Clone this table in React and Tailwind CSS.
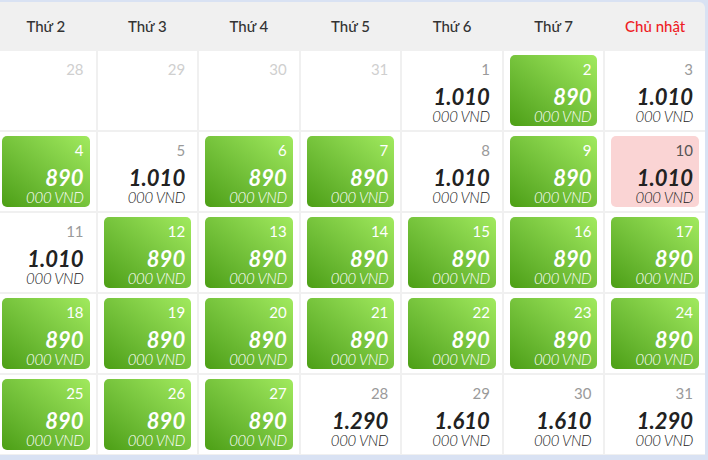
const days = ["Thứ 2", "Thứ 3", "Thứ 4", "Thứ 5", "Thứ 6", "Thứ 7", "Chủ nhật"];

// type: off = previous month, cheap = green, pick = pink, normal = white
const cells = [
  { d: 28, type: "off" },
  { d: 29, type: "off" },
  { d: 30, type: "off" },
  { d: 31, type: "off" },
  { d: 1, price: "1.010" },
  { d: 2, price: "890", type: "cheap" },
  { d: 3, price: "1.010" },

  { d: 4, price: "890", type: "cheap" },
  { d: 5, price: "1.010" },
  { d: 6, price: "890", type: "cheap" },
  { d: 7, price: "890", type: "cheap" },
  { d: 8, price: "1.010" },
  { d: 9, price: "890", type: "cheap" },
  { d: 10, price: "1.010", type: "pick" },

  { d: 11, price: "1.010" },
  { d: 12, price: "890", type: "cheap" },
  { d: 13, price: "890", type: "cheap" },
  { d: 14, price: "890", type: "cheap" },
  { d: 15, price: "890", type: "cheap" },
  { d: 16, price: "890", type: "cheap" },
  { d: 17, price: "890", type: "cheap" },

  { d: 18, price: "890", type: "cheap" },
  { d: 19, price: "890", type: "cheap" },
  { d: 20, price: "890", type: "cheap" },
  { d: 21, price: "890", type: "cheap" },
  { d: 22, price: "890", type: "cheap" },
  { d: 23, price: "890", type: "cheap" },
  { d: 24, price: "890", type: "cheap" },

  { d: 25, price: "890", type: "cheap" },
  { d: 26, price: "890", type: "cheap" },
  { d: 27, price: "890", type: "cheap" },
  { d: 28, price: "1.290" },
  { d: 29, price: "1.610" },
  { d: 30, price: "1.610" },
  { d: 31, price: "1.290" },
];

const boxStyles = {
  cheap: "bg-linear-to-tr from-[#4c9f14] to-[#a1ea5e] text-white",
  pick: "bg-[#fad4d4] text-[#222]",
  normal: "text-[#222]",
  off: "",
};

const numStyles = {
  cheap: "text-white",
  pick: "text-[#555]",
  normal: "text-[#9a9a9a]",
  off: "text-[#cfcfcf]",
};

const DayCell = ({ d, price, type = "normal" }) => {
  return (
    <div className="bg-white h-[79px] px-[6px] py-[4px]">
      <div className={`h-full rounded-[5px] flex flex-col items-end pt-[6px] pr-[6px] pb-[2px] ${boxStyles[type]}`}>
        <span className={`text-[15px] leading-[16px] ${numStyles[type]}`}>{d}</span>
        <div className="flex-1" />
        {price && (
          <>
            <span className="text-[22px] leading-[22px] font-bold italic">{price}</span>
            <span className="text-[15px] leading-[16px] font-light italic tracking-[-0.3px]">000 VND</span>
          </>
        )}
      </div>
    </div>
  );
};

export default function App() {
  return (
    <div className="w-[708px] h-[460px] bg-[#d9e2f3] overflow-hidden pt-[2px] font-['Lato',sans-serif]">
      <div className="w-[709px] -ml-[4px] h-[453px] bg-[#f0f0f0] rounded-tr-[6px] overflow-hidden">
        <div className="grid grid-cols-7 gap-x-[2px] h-[49px] items-center text-center">
          {days.map((day, i) => (
            <span
              key={day}
              className={`text-[15px] font-medium ${i === 6 ? "text-[#ee1c25]" : "text-[#333]"}`}
            >
              {day}
            </span>
          ))}
        </div>
        <div className="grid grid-cols-7 gap-[2px] pb-[2px]">
          {cells.map((c, i) => (
            <DayCell key={i} {...c} />
          ))}
        </div>
      </div>
    </div>
  );
}
